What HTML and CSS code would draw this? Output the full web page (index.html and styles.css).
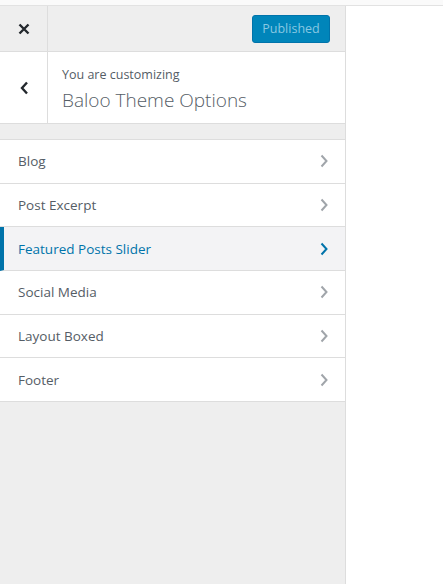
FILE: index.html
```html
<!DOCTYPE html>
<html>
<head>
<meta charset="utf-8">
<link rel="stylesheet" href="styles.css">
</head>
<body>
<div class="topstrip"></div>
<div class="page">
  <aside class="sidebar">
    <div class="actions">
      <button class="close" aria-label="Close">
        <svg width="12" height="12" viewBox="0 0 12 12"><path d="M1.5 1.5L10.5 10.5M10.5 1.5L1.5 10.5" stroke="#23282d" stroke-width="2.4" stroke-linecap="butt"/></svg>
      </button>
      <div class="spacer"></div>
      <button class="publish">Published</button>
    </div>
    <div class="info">
      <button class="back" aria-label="Back">
        <svg width="10" height="14" viewBox="0 0 10 14"><path d="M8 1.5L3 7L8 12.5" fill="none" stroke="#23282d" stroke-width="2.4"/></svg>
      </button>
      <div class="title">
        <span class="small">You are customizing</span>
        <span class="big">Baloo Theme Options</span>
      </div>
    </div>
    <ul class="sections">
      <li class="item">Blog<svg class="chev" width="8" height="14" viewBox="0 0 8 14"><path d="M1.5 1.5L6.5 7L1.5 12.5" fill="none" stroke="currentColor" stroke-width="2"/></svg></li>
      <li class="item">Post Excerpt<svg class="chev" width="8" height="14" viewBox="0 0 8 14"><path d="M1.5 1.5L6.5 7L1.5 12.5" fill="none" stroke="currentColor" stroke-width="2"/></svg></li>
      <li class="item active">Featured Posts Slider<svg class="chev" width="8" height="14" viewBox="0 0 8 14"><path d="M1.5 1.5L6.5 7L1.5 12.5" fill="none" stroke="currentColor" stroke-width="2"/></svg></li>
      <li class="item">Social Media<svg class="chev" width="8" height="14" viewBox="0 0 8 14"><path d="M1.5 1.5L6.5 7L1.5 12.5" fill="none" stroke="currentColor" stroke-width="2"/></svg></li>
      <li class="item">Layout Boxed<svg class="chev" width="8" height="14" viewBox="0 0 8 14"><path d="M1.5 1.5L6.5 7L1.5 12.5" fill="none" stroke="currentColor" stroke-width="2"/></svg></li>
      <li class="item">Footer<svg class="chev" width="8" height="14" viewBox="0 0 8 14"><path d="M1.5 1.5L6.5 7L1.5 12.5" fill="none" stroke="currentColor" stroke-width="2"/></svg></li>
    </ul>
  </aside>
  <main class="preview"></main>
</div>
</body>
</html>
```
FILE: styles.css
```css
* { box-sizing: border-box; }
html, body { margin: 0; padding: 0; height: 100%; }
body {
  font-family: "Open Sans", "Liberation Sans", sans-serif;
  background: #fff;
  display: flex;
  flex-direction: column;
  overflow: hidden;
}
.topstrip {
  height: 6px;
  flex: none;
  background: #fafafa;
  border-bottom: 1px solid #e2e2e2;
}
.page {
  flex: 1;
  display: flex;
}
.sidebar {
  width: 346px;
  background: #eee;
  border-right: 1px solid #ddd;
  display: flex;
  flex-direction: column;
}
.preview { flex: 1; background: #fff; }
.actions {
  height: 46px;
  display: flex;
  align-items: center;
  border-bottom: 1px solid #ddd;
  padding-right: 15px;
}
.close {
  width: 48px;
  height: 45px;
  border: 0;
  border-right: 1px solid #ddd;
  background: #eee;
  display: flex;
  align-items: center;
  justify-content: center;
  padding: 0;
}
.spacer { flex: 1; }
.publish {
  background: #0085ba;
  border: 1px solid #0073aa;
  border-radius: 3px;
  color: #88c8e2;
  font-family: inherit;
  font-size: 12.5px;
  height: 28px;
  width: 78px;
  padding: 0;
  line-height: 26px;
}
.info {
  height: 72px;
  background: #fff;
  display: flex;
  border-bottom: 1px solid #ddd;
}
.back {
  width: 48px;
  border: 0;
  border-right: 1px solid #ddd;
  background: #fff;
  display: flex;
  align-items: center;
  justify-content: center;
  padding: 0;
}
.title {
  display: flex;
  flex-direction: column;
  padding: 15px 0 0 14px;
  color: #555d66;
}
.small { font-size: 12.5px; line-height: 16px; }
.big { font-size: 19px; font-weight: 300; line-height: 28px; margin-top: 3px; }
.sections {
  list-style: none;
  margin: 15px 0 0;
  padding: 0;
  border-top: 1px solid #ddd;
}
.item {
  height: 43.67px;
  background: #fff;
  border-bottom: 1px solid #ddd;
  display: flex;
  align-items: center;
  justify-content: space-between;
  padding: 0 17px 0 18px;
  font-size: 13.5px;
  font-weight: 500;
  color: #555d66;
}
.chev { color: #a0a5aa; }
.item.active {
  background: #f3f3f5;
  color: #0073aa;
  border-left: 4px solid #0073aa;
  padding-left: 14px;
}
.item.active .chev { color: #0073aa; }
```
